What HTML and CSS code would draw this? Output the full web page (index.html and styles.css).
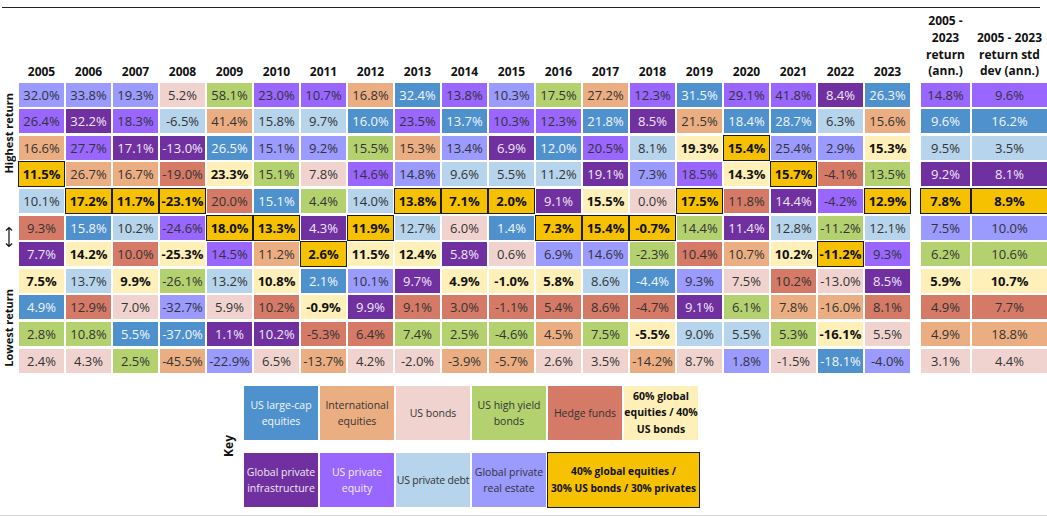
FILE: index.html
```html
<!DOCTYPE html>
<html lang="en">
<head>
<meta charset="utf-8">
<title>Asset class returns quilt</title>
<link rel="stylesheet" href="styles.css">
</head>
<body>
<div class="rule"></div>
<div class="board">
  <div class="side">
    <div class="vlabel high">Highest return</div>
    <div class="arrow"><svg width="8" height="22" viewBox="0 0 8 22"><path d="M4 1.5v19M1 4.5l3-3 3 3M1 17.5l3 3 3-3" stroke="#111" stroke-width="1.2" fill="none"/></svg></div>
    <div class="vlabel low">Lowest return</div>
  </div>
  <div class="years">
    <div class="yr">2005</div><div class="yr">2006</div><div class="yr">2007</div><div class="yr">2008</div><div class="yr">2009</div><div class="yr">2010</div><div class="yr">2011</div><div class="yr">2012</div><div class="yr">2013</div><div class="yr">2014</div><div class="yr">2015</div><div class="yr">2016</div><div class="yr">2017</div><div class="yr">2018</div><div class="yr">2019</div><div class="yr">2020</div><div class="yr">2021</div><div class="yr">2022</div><div class="yr">2023</div>

    <div class="c r">32.0%</div><div class="c r">33.8%</div><div class="c r">19.3%</div><div class="c b">5.2%</div><div class="c h">58.1%</div><div class="c p">23.0%</div><div class="c p">10.7%</div><div class="c i">16.8%</div><div class="c l">32.4%</div><div class="c p">13.8%</div><div class="c r">10.3%</div><div class="c h">17.5%</div><div class="c i">27.2%</div><div class="c p">12.3%</div><div class="c l">31.5%</div><div class="c p">29.1%</div><div class="c p">41.8%</div><div class="c g">8.4%</div><div class="c l">26.3%</div>

    <div class="c p">26.4%</div><div class="c g">32.2%</div><div class="c p">18.3%</div><div class="c d">-6.5%</div><div class="c i">41.4%</div><div class="c d">15.8%</div><div class="c d">9.7%</div><div class="c l">16.0%</div><div class="c p">23.5%</div><div class="c l">13.7%</div><div class="c p">10.3%</div><div class="c p">12.3%</div><div class="c l">21.8%</div><div class="c g">8.5%</div><div class="c i">21.5%</div><div class="c l">18.4%</div><div class="c l">28.7%</div><div class="c d">6.3%</div><div class="c i">15.6%</div>

    <div class="c i">16.6%</div><div class="c p">27.7%</div><div class="c g">17.1%</div><div class="c g">-13.0%</div><div class="c l">26.5%</div><div class="c r">15.1%</div><div class="c r">9.2%</div><div class="c h">15.5%</div><div class="c i">15.3%</div><div class="c r">13.4%</div><div class="c g">6.9%</div><div class="c l">12.0%</div><div class="c p">20.5%</div><div class="c d">8.1%</div><div class="c s">19.3%</div><div class="c x">15.4%</div><div class="c r">25.4%</div><div class="c r">2.9%</div><div class="c s">15.3%</div>

    <div class="c x">11.5%</div><div class="c i">26.7%</div><div class="c i">16.7%</div><div class="c f">-19.0%</div><div class="c s">23.3%</div><div class="c h">15.1%</div><div class="c b">7.8%</div><div class="c p">14.6%</div><div class="c r">14.8%</div><div class="c d">9.6%</div><div class="c d">5.5%</div><div class="c d">11.2%</div><div class="c g">19.1%</div><div class="c r">7.3%</div><div class="c p">18.5%</div><div class="c s">14.3%</div><div class="c x">15.7%</div><div class="c f">-4.1%</div><div class="c h">13.5%</div>

    <div class="c d">10.1%</div><div class="c x">17.2%</div><div class="c x">11.7%</div><div class="c x">-23.1%</div><div class="c f">20.0%</div><div class="c l">15.1%</div><div class="c h">4.4%</div><div class="c d">14.0%</div><div class="c x">13.8%</div><div class="c x">7.1%</div><div class="c x">2.0%</div><div class="c g">9.1%</div><div class="c s">15.5%</div><div class="c b">0.0%</div><div class="c x">17.5%</div><div class="c f">11.8%</div><div class="c g">14.4%</div><div class="c p">-4.2%</div><div class="c x">12.9%</div>

    <div class="c f">9.3%</div><div class="c l">15.8%</div><div class="c d">10.2%</div><div class="c p">-24.6%</div><div class="c x">18.0%</div><div class="c x">13.3%</div><div class="c g">4.3%</div><div class="c x">11.9%</div><div class="c d">12.7%</div><div class="c b">6.0%</div><div class="c l">1.4%</div><div class="c x">7.3%</div><div class="c x">15.4%</div><div class="c x">-0.7%</div><div class="c h">14.4%</div><div class="c g">11.4%</div><div class="c d">12.8%</div><div class="c h">-11.2%</div><div class="c d">12.1%</div>

    <div class="c g">7.7%</div><div class="c s">14.2%</div><div class="c f">10.0%</div><div class="c s">-25.3%</div><div class="c p">14.5%</div><div class="c i">11.2%</div><div class="c x">2.6%</div><div class="c s">11.5%</div><div class="c s">12.4%</div><div class="c g">5.8%</div><div class="c b">0.6%</div><div class="c r">6.9%</div><div class="c r">14.6%</div><div class="c h">-2.3%</div><div class="c f">10.4%</div><div class="c i">10.7%</div><div class="c s">10.2%</div><div class="c x">-11.2%</div><div class="c p">9.3%</div>

    <div class="c s">7.5%</div><div class="c d">13.7%</div><div class="c s">9.9%</div><div class="c h">-26.1%</div><div class="c d">13.2%</div><div class="c s">10.8%</div><div class="c l">2.1%</div><div class="c r">10.1%</div><div class="c g">9.7%</div><div class="c s">4.9%</div><div class="c s">-1.0%</div><div class="c s">5.8%</div><div class="c d">8.6%</div><div class="c l">-4.4%</div><div class="c r">9.3%</div><div class="c b">7.5%</div><div class="c f">10.2%</div><div class="c b">-13.0%</div><div class="c g">8.5%</div>

    <div class="c l">4.9%</div><div class="c f">12.9%</div><div class="c b">7.0%</div><div class="c r">-32.7%</div><div class="c b">5.9%</div><div class="c f">10.2%</div><div class="c s">-0.9%</div><div class="c g">9.9%</div><div class="c f">9.1%</div><div class="c f">3.0%</div><div class="c f">-1.1%</div><div class="c f">5.4%</div><div class="c f">8.6%</div><div class="c f">-4.7%</div><div class="c g">9.1%</div><div class="c h">6.1%</div><div class="c i">7.8%</div><div class="c i">-16.0%</div><div class="c f">8.1%</div>

    <div class="c h">2.8%</div><div class="c h">10.8%</div><div class="c l">5.5%</div><div class="c l">-37.0%</div><div class="c g">1.1%</div><div class="c g">10.2%</div><div class="c f">-5.3%</div><div class="c f">6.4%</div><div class="c h">7.4%</div><div class="c h">2.5%</div><div class="c h">-4.6%</div><div class="c i">4.5%</div><div class="c h">7.5%</div><div class="c s">-5.5%</div><div class="c d">9.0%</div><div class="c d">5.5%</div><div class="c h">5.3%</div><div class="c s">-16.1%</div><div class="c b">5.5%</div>

    <div class="c b">2.4%</div><div class="c b">4.3%</div><div class="c h">2.5%</div><div class="c i">-45.5%</div><div class="c r">-22.9%</div><div class="c b">6.5%</div><div class="c i">-13.7%</div><div class="c b">4.2%</div><div class="c b">-2.0%</div><div class="c i">-3.9%</div><div class="c i">-5.7%</div><div class="c b">2.6%</div><div class="c b">3.5%</div><div class="c i">-14.2%</div><div class="c b">8.7%</div><div class="c r">1.8%</div><div class="c b">-1.5%</div><div class="c l">-18.1%</div><div class="c r">-4.0%</div>
  </div>
  <div class="summary">
    <div class="sh">2005 -<br>2023<br>return<br>(ann.)</div><div class="sh">2005 - 2023<br>return std<br>dev (ann.)</div>
    <div class="c p">14.8%</div><div class="c p">9.6%</div>
    <div class="c l">9.6%</div><div class="c l">16.2%</div>
    <div class="c d">9.5%</div><div class="c d">3.5%</div>
    <div class="c g">9.2%</div><div class="c g">8.1%</div>
    <div class="c x">7.8%</div><div class="c x">8.9%</div>
    <div class="c r">7.5%</div><div class="c r">10.0%</div>
    <div class="c h">6.2%</div><div class="c h">10.6%</div>
    <div class="c s">5.9%</div><div class="c s">10.7%</div>
    <div class="c f">4.9%</div><div class="c f">7.7%</div>
    <div class="c i">4.9%</div><div class="c i">18.8%</div>
    <div class="c b">3.1%</div><div class="c b">4.4%</div>
  </div>
</div>
<div class="key">
  <div class="key-label">Key</div>
  <div class="key-grid">
    <div class="k l">US large-cap equities</div>
    <div class="k i">International equities</div>
    <div class="k b">US bonds</div>
    <div class="k h">US high yield bonds</div>
    <div class="k f">Hedge funds</div>
    <div class="k s">60% global equities / 40% US bonds</div>
    <div class="k g">Global private infrastructure</div>
    <div class="k p light">US private equity</div>
    <div class="k d nowrap">US private debt</div>
    <div class="k r">Global private real estate</div>
    <div class="k x wide">40% global equities /<br>30% US bonds / 30% privates</div>
  </div>
</div>
<div class="foot"></div>
</body>
</html>
```

FILE: styles.css
```css
* { box-sizing: border-box; }
html, body { margin: 0; padding: 0; background: #fff; }
body {
  width: 1047px;
  height: 517px;
  overflow: hidden;
  font-family: "Open Sans", "Noto Sans", sans-serif;
  color: #333;
}

.rule { margin: 7px 7px 0 2px; border-top: 1px solid #222; }

.board { display: flex; }

.side {
  width: 17px;
  margin-right: 2px;
  display: grid;
  grid-template-rows: 72px repeat(11, 24px);
  row-gap: 2.6px;
}
.vlabel {
  writing-mode: vertical-rl;
  transform: rotate(180deg);
  font-weight: 700;
  font-size: 11px;
  line-height: 14px;
  color: #111;
  justify-self: center;
}
.high { grid-row: 2 / span 4; align-self: start; margin-top: 10px; }
.low { grid-row: 9 / span 4; align-self: end; margin-bottom: 6px; }
.arrow {
  grid-row: 7 / span 2;
  align-self: center;
  justify-self: center;
  margin-top: -8px;
  display: flex;
}

.years {
  display: grid;
  grid-template-columns: repeat(19, 45px);
  grid-template-rows: 72px repeat(11, 24px);
  gap: 2.6px 2px;
}
.summary {
  margin-left: 11px;
  display: grid;
  grid-template-columns: 49px 75px;
  grid-template-rows: 72px repeat(11, 24px);
  gap: 2.6px 2px;
}
.yr {
  align-self: end;
  text-align: center;
  font-weight: 700;
  font-size: 12px;
  line-height: 16px;
  color: #111;
}
.sh {
  align-self: end;
  text-align: center;
  font-weight: 700;
  font-size: 12px;
  line-height: 16.7px;
  color: #111;
}

.c {
  display: flex;
  align-items: center;
  justify-content: center;
  font-size: 13px;
  white-space: nowrap;
}

/* categories */
.l { background: #4f91cd; color: #f2f6fb; }
.i { background: #ebae82; }
.b { background: #f0d3cf; }
.h { background: #b4d16f; }
.f { background: #d47a67; }
.s { background: #fef0b8; font-weight: 700; color: #111; }
.g { background: #7030a0; color: #efe8f6; }
.p { background: #9966ff; }
.d { background: #b6d4eb; }
.r { background: #9a9aff; }
.x {
  background: #f5c100;
  font-weight: 700;
  color: #111;
  border: 1px solid #1a1a1a;
  margin: -1px;
}

.key {
  display: flex;
  align-items: center;
  margin: 13px 0 0 218px;
}
.key-label {
  writing-mode: vertical-rl;
  transform: rotate(180deg);
  font-weight: 700;
  font-size: 12px;
  width: 20px;
  margin-right: 6px;
  color: #111;
  display: flex;
  align-items: center;
}
.key-grid {
  display: grid;
  grid-template-columns: repeat(6, 74px);
  grid-template-rows: 54px 54px;
  column-gap: 2px;
  row-gap: 13px;
}
.k {
  display: flex;
  align-items: center;
  justify-content: center;
  text-align: center;
  font-size: 10.5px;
  line-height: 16px;
  padding: 0 2px;
}
.k.nowrap { white-space: nowrap; padding: 0; letter-spacing: -0.2px; }
.k.s { font-size: 10.5px; line-height: 16.5px; padding: 0; }
.k.light { color: #f3eefc; }
.k.wide {
  grid-column: 5 / span 2;
  font-size: 10.2px;
  line-height: 16.5px;
  margin: -1px -2px -1px -1px;
}

.foot { margin-top: 8px; border-top: 1px solid #d9d9d9; }
```
